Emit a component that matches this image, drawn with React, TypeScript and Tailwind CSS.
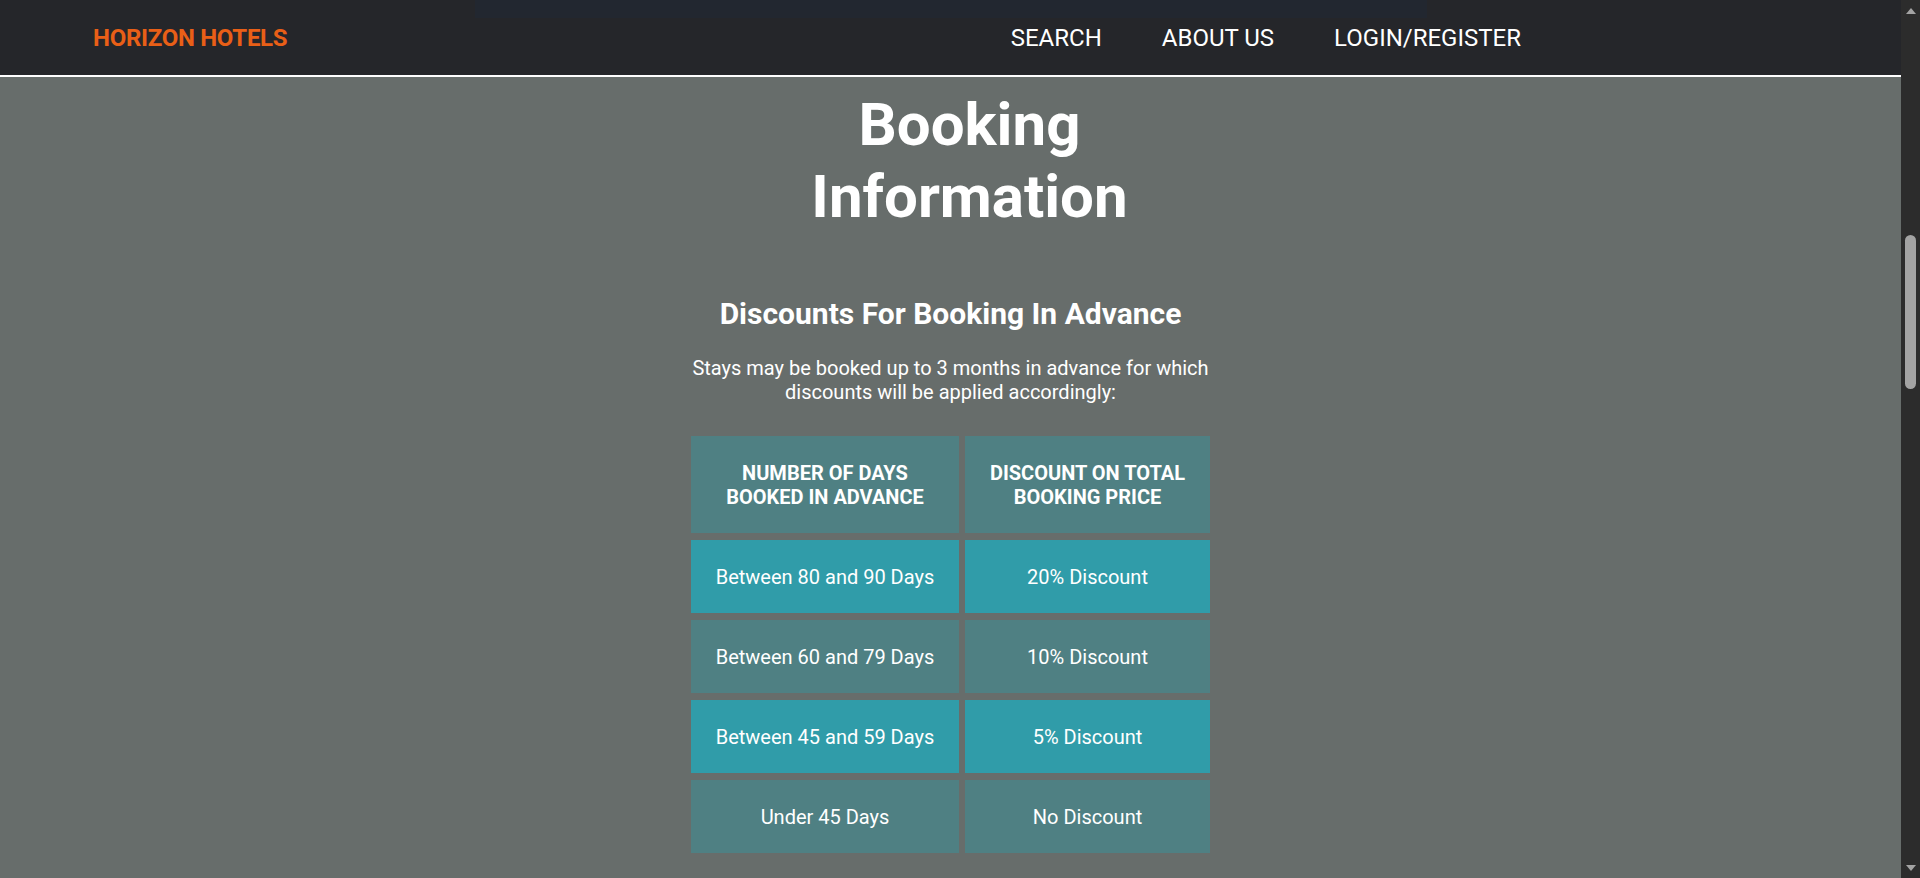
import React from "react";

const rows: { days: string; discount: string; bright: boolean }[] = [
  { days: "Between 80 and 90 Days", discount: "20% Discount", bright: true },
  { days: "Between 60 and 79 Days", discount: "10% Discount", bright: false },
  { days: "Between 45 and 59 Days", discount: "5% Discount", bright: true },
  { days: "Under 45 Days", discount: "No Discount", bright: false },
];

export default function App() {
  return (
    <div
      className="flex h-[878px] w-full overflow-hidden bg-[#676d6b]"
      style={{ fontFamily: "Roboto, 'Noto Sans', sans-serif" }}
    >
      <div className="flex min-w-0 flex-1 flex-col">
        <header className="relative flex h-[77px] shrink-0 items-center justify-between border-b-2 border-white bg-[#25262a] pl-[93px] pr-[380px]">
          <div className="absolute left-[475px] top-0 h-[18px] w-[952px] bg-[#222730]" />
          <div className="relative text-[24px] font-bold leading-none tracking-[-0.3px] text-[#e95f17]">
            HORIZON HOTELS
          </div>
          <nav className="relative flex gap-[60px] text-[24px] leading-none text-white">
            <span>SEARCH</span>
            <span>ABOUT US</span>
            <span>LOGIN/REGISTER</span>
          </nav>
        </header>

        <main className="mx-auto flex w-[520px] flex-col items-center text-white">
          <h1 className="mt-[12px] pl-[38px] text-center text-[60px] font-bold leading-[72px]">
            Booking
            <br />
            Information
          </h1>
          <h2 className="mt-[63px] whitespace-nowrap text-center text-[30px] font-bold leading-[35px]">
            Discounts For Booking In Advance
          </h2>
          <p className="mt-[25px] text-center text-[20px] leading-[24px]">
            Stays may be booked up to 3 months in advance for which discounts will be applied accordingly:
          </p>
          <div className="mt-[32px] grid grid-cols-[268px_245px] gap-x-[6px] gap-y-[7px]">
            <div className="bg-[#4f8083] py-[24.5px] text-center text-[20px] font-bold uppercase leading-[24px]">
              Number of days
              <br />
              booked in advance
            </div>
            <div className="bg-[#4f8083] py-[24.5px] text-center text-[20px] font-bold uppercase leading-[24px]">
              Discount on total
              <br />
              booking price
            </div>
            {rows.map((r) => (
              <React.Fragment key={r.days}>
                <div
                  className={`${r.bright ? "bg-[#309ca9]" : "bg-[#4f8083]"} py-[24.5px] text-center text-[20px] leading-[24px]`}
                >
                  {r.days}
                </div>
                <div
                  className={`${r.bright ? "bg-[#309ca9]" : "bg-[#4f8083]"} py-[24.5px] text-center text-[20px] leading-[24px]`}
                >
                  {r.discount}
                </div>
              </React.Fragment>
            ))}
          </div>
        </main>
      </div>

      <div className="relative flex h-full w-[19px] shrink-0 flex-col items-center bg-[#2c2c2c]">
        <svg className="mt-[8px]" width="10" height="6" viewBox="0 0 10 6">
          <polygon points="5,0 10,6 0,6" fill="#a3a3a3" />
        </svg>
        <div className="mt-[221px] h-[154px] w-[11px] rounded-[6px] bg-[#a3a3a3]" />
        <svg className="mb-[7px] mt-auto" width="10" height="6" viewBox="0 0 10 6">
          <polygon points="0,0 10,0 5,6" fill="#a3a3a3" />
        </svg>
      </div>
    </div>
  );
}
